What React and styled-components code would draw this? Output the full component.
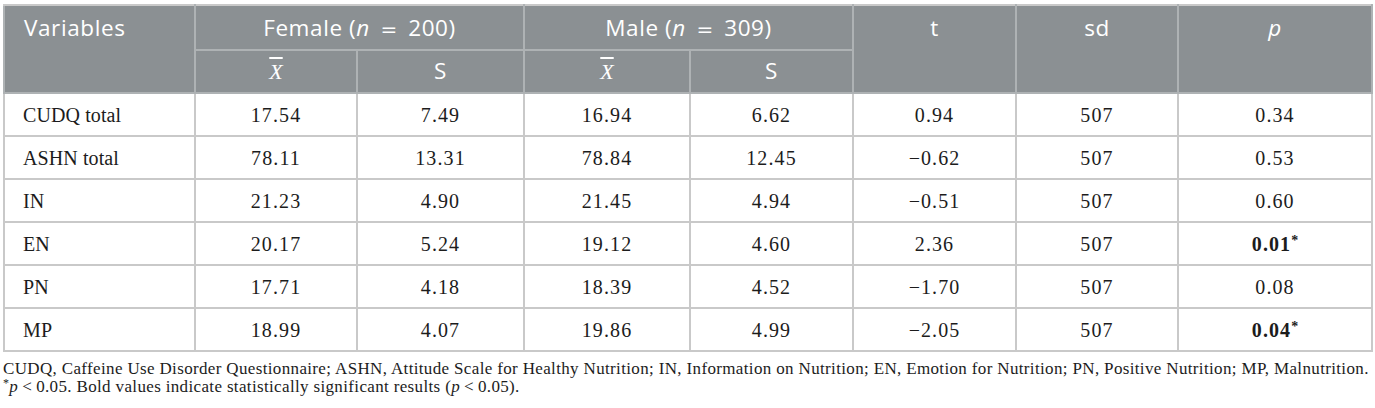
import React from "react";
import styled, { createGlobalStyle } from "styled-components";

const Global = createGlobalStyle`
  html, body { margin: 0; padding: 0; background: #ffffff; }
  body { font-family: "Liberation Serif", "Times New Roman", serif; color: #1c1c1c; }
`;

const Page = styled.div`
  padding: 4px 4px 0 3px;
  width: 1368px;
`;

const Table = styled.table`
  border-collapse: collapse;
  table-layout: fixed;
  width: 1368px;
  border: 2px solid #c9c9c9;
`;

const HeadCell = styled.th`
  background: #8b9093;
  color: #ffffff;
  font-family: "Open Sans", Lato, sans-serif;
  font-weight: 400;
  font-size: 22.5px;
  letter-spacing: 0.6px;
  text-align: ${(p) => (p.$left ? "left" : "center")};
  vertical-align: top;
  padding: ${(p) => (p.$left ? "8px 20px 0 19px" : "8px 8px 0 8px")};
  height: ${(p) => p.$h}px;
  box-sizing: border-box;
  border: 2px solid #aeb2b4;
  border-top-color: #c9c9c9;
  line-height: 27px;
`;

const SubHeadCell = styled(HeadCell)`
  padding-top: 6px;
`;

const Cell = styled.td`
  height: 43px;
  box-sizing: border-box;
  border: 2px solid #c9c9c9;
  font-family: "Liberation Serif", "Times New Roman", serif;
  font-size: 20px;
  line-height: 24px;
  letter-spacing: ${(p) => (p.$left ? "0.1px" : "1.1px")};
  padding: 0 ${(p) => (p.$left ? "18px" : "8px")};
  text-align: ${(p) => (p.$left ? "left" : "center")};
  font-weight: ${(p) => (p.$bold ? 700 : 400)};
  color: #1c1c1c;
`;

const Ital = styled.i`
  font-style: italic;
`;

const MathEq = styled.span`
  font-family: "DejaVu Sans", sans-serif;
  font-size: 20px;
  padding: 0 4px;
`;

const XBar = styled.span`
  display: inline-block;
  font-family: "Liberation Serif", serif;
  font-style: italic;
  font-size: 22px;
  letter-spacing: 0;
  text-decoration: overline;
  text-decoration-thickness: 1.5px;
`;

const Star = styled.sup`
  font-size: 14px;
  vertical-align: 6px;
  line-height: 0;
  letter-spacing: 0;
`;

const Foot = styled.div`
  padding-top: 8px;
  font-family: "Liberation Serif", "Times New Roman", serif;
  font-size: 17px;
  letter-spacing: 0.35px;
  line-height: 18px;
  color: #1c1c1c;
`;

const FootLine = styled.div`
  white-space: nowrap;
`;

const FootStar = styled.sup`
  font-size: 12px;
  vertical-align: 5px;
  line-height: 0;
`;

const Lt = styled.span`
  padding: 0 4px;
`;

const rows = [
  ["CUDQ total", "17.54", "7.49", "16.94", "6.62", "0.94", "507", "0.34", false],
  ["ASHN total", "78.11", "13.31", "78.84", "12.45", "\u22120.62", "507", "0.53", false],
  ["IN", "21.23", "4.90", "21.45", "4.94", "\u22120.51", "507", "0.60", false],
  ["EN", "20.17", "5.24", "19.12", "4.60", "2.36", "507", "0.01", true],
  ["PN", "17.71", "4.18", "18.39", "4.52", "\u22121.70", "507", "0.08", false],
  ["MP", "18.99", "4.07", "19.86", "4.99", "\u22122.05", "507", "0.04", true],
];

const widths = [191, 162, 167, 166, 163, 163, 162, 194];

export default function App() {
  return (
    <Page>
      <Global />
      <Table>
        <colgroup>
          {widths.map((w, i) => (
            <col key={i} style={{ width: w }} />
          ))}
        </colgroup>
        <thead>
          <tr>
            <HeadCell rowSpan={2} $left $h={45}>Variables</HeadCell>
            <HeadCell colSpan={2} $h={45}>
              Female (<Ital>n</Ital> <MathEq>=</MathEq> 200)
            </HeadCell>
            <HeadCell colSpan={2} $h={45}>
              Male (<Ital>n</Ital> <MathEq>=</MathEq> 309)
            </HeadCell>
            <HeadCell rowSpan={2} $h={45}>t</HeadCell>
            <HeadCell rowSpan={2} $h={45}>sd</HeadCell>
            <HeadCell rowSpan={2} $h={45}>
              <Ital>p</Ital>
            </HeadCell>
          </tr>
          <tr>
            <SubHeadCell $h={43}><XBar>X</XBar></SubHeadCell>
            <SubHeadCell $h={43}>S</SubHeadCell>
            <SubHeadCell $h={43}><XBar>X</XBar></SubHeadCell>
            <SubHeadCell $h={43}>S</SubHeadCell>
          </tr>
        </thead>
        <tbody>
          {rows.map((r) => (
            <tr key={r[0]}>
              <Cell $left>{r[0]}</Cell>
              {r.slice(1, 7).map((v, i) => (
                <Cell key={i}>{v}</Cell>
              ))}
              <Cell $bold={r[8]}>
                {r[7]}
                {r[8] && <Star>*</Star>}
              </Cell>
            </tr>
          ))}
        </tbody>
      </Table>
      <Foot>
        <FootLine>
          CUDQ, Caffeine Use Disorder Questionnaire; ASHN, Attitude Scale for Healthy Nutrition; IN, Information on Nutrition; EN, Emotion for Nutrition; PN, Positive Nutrition; MP, Malnutrition.
        </FootLine>
        <FootLine>
          <FootStar>*</FootStar>
          <Ital>p</Ital>
          <Lt>&lt;</Lt>0.05. Bold values indicate statistically significant results (<Ital>p</Ital>
          <Lt>&lt;</Lt>0.05).
        </FootLine>
      </Foot>
    </Page>
  );
}
